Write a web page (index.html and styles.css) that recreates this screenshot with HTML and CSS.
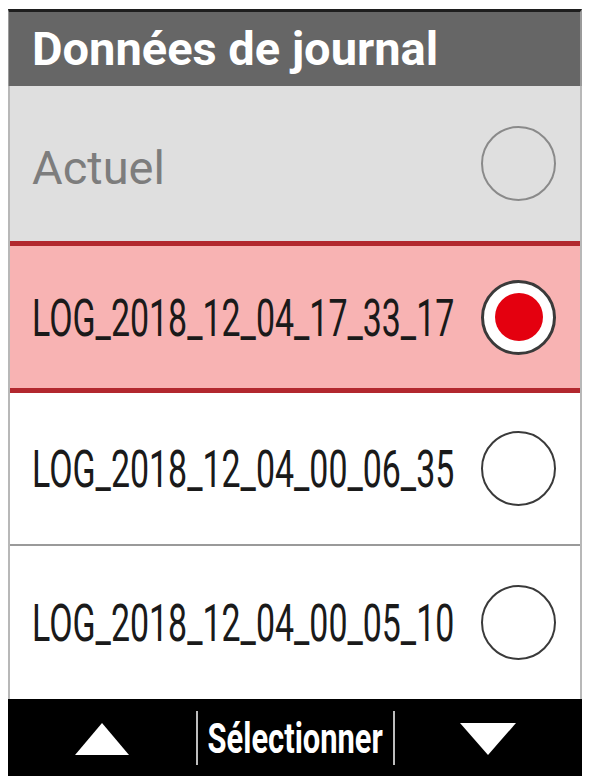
FILE: index.html
```html
<!DOCTYPE html>
<html lang="fr">
<head>
<meta charset="utf-8">
<title>Données de journal</title>
<link rel="stylesheet" href="styles.css">
</head>
<body>
<div class="device">
  <header class="title-bar">Données de journal</header>
  <ul class="log-list">
    <li class="row row-current">
      <span class="label label-current">Actuel</span>
      <span class="radio radio-muted"></span>
    </li>
    <li class="row row-selected">
      <span class="label label-log">LOG_2018_12_04_17_33_17</span>
      <span class="radio radio-on"><span class="dot"></span></span>
    </li>
    <li class="row row-plain row-divided">
      <span class="label label-log">LOG_2018_12_04_00_06_35</span>
      <span class="radio"></span>
    </li>
    <li class="row row-plain">
      <span class="label label-log">LOG_2018_12_04_00_05_10</span>
      <span class="radio"></span>
    </li>
  </ul>
  <footer class="soft-keys">
    <div class="key key-side">
      <svg class="tri" width="54" height="32" viewBox="0 0 54 32"><polygon points="27,0 54,32 0,32" fill="#fff"/></svg>
    </div>
    <div class="key key-mid"><span class="key-text">Sélectionner</span></div>
    <div class="key key-side">
      <svg class="tri" width="56" height="32" viewBox="0 0 56 32"><polygon points="0,0 56,0 28,32" fill="#fff"/></svg>
    </div>
  </footer>
</div>
</body>
</html>
```
FILE: styles.css
```css
* { box-sizing: border-box; }
html, body { margin: 0; padding: 0; background: #fff; }
body { font-family: Roboto, "Noto Sans", sans-serif; }

.device {
  width: 574px;
  margin: 9px 0 0 8px;
  display: flex;
  flex-direction: column;
}

.title-bar {
  height: 77px;
  border-top: 3px solid #1e1e1e;
  background: #666666;
  color: #fff;
  font-weight: 700;
  font-size: 47px;
  line-height: 1;
  padding: 0 0 1px 23px;
  display: flex;
  align-items: center;
  border-left: 1px solid #9a9a9a;
  border-right: 2px solid #9a9a9a;
}

.log-list {
  list-style: none;
  margin: 0;
  padding: 0;
  border-left: 2px solid #b8b8b8;
  border-right: 2px solid #b8b8b8;
}

.row {
  display: flex;
  align-items: center;
  justify-content: space-between;
  padding: 0 24px 0 22px;
}

.row-current { height: 155px; background: #dfdfdf; }
.row-selected {
  height: 152px;
  background: #f8b3b3;
  border-top: 5px solid #b2282e;
  border-bottom: 5px solid #b2282e;
}
.row-plain { height: 153px; background: #fff; }
.row-divided { border-bottom: 2px solid #9a9a9a; }

.label { white-space: nowrap; line-height: 1; }
.label-current {
  font-size: 47px;
  color: #7d7d7d;
  padding-top: 8px;
}
.label-log {
  font-size: 51px;
  color: #1a1a1a;
  display: inline-block;
  transform: scaleX(0.665);
  transform-origin: left center;
  width: 430px;
  padding-top: 2px;
}

.radio {
  width: 75px;
  height: 75px;
  border-radius: 50%;
  border: 2.5px solid #3a3a3a;
  background: #fff;
  display: flex;
  align-items: center;
  justify-content: center;
  flex: none;
}
.radio-muted { border-color: #8a8a8a; background: transparent; }
.radio-on { border: 3px solid #3a3a3a; }
.radio-on .dot {
  width: 48px;
  height: 48px;
  border-radius: 50%;
  background: #e4000f;
}

.soft-keys {
  height: 77px;
  background: #000;
  display: flex;
  align-items: center;
}
.key { display: flex; align-items: center; justify-content: center; }
.key-side { flex: 1; }
.key-mid {
  width: 199px;
  height: 54px;
  border-left: 2px solid #bdbdbd;
  border-right: 2px solid #bdbdbd;
}
.key-text {
  color: #fff;
  font-weight: 700;
  font-size: 42px;
  display: inline-block;
  transform: scaleX(0.735);
  line-height: 1;
  white-space: nowrap;
  padding-top: 2px;
}
.tri { display: block; margin-top: 2px; }
```
